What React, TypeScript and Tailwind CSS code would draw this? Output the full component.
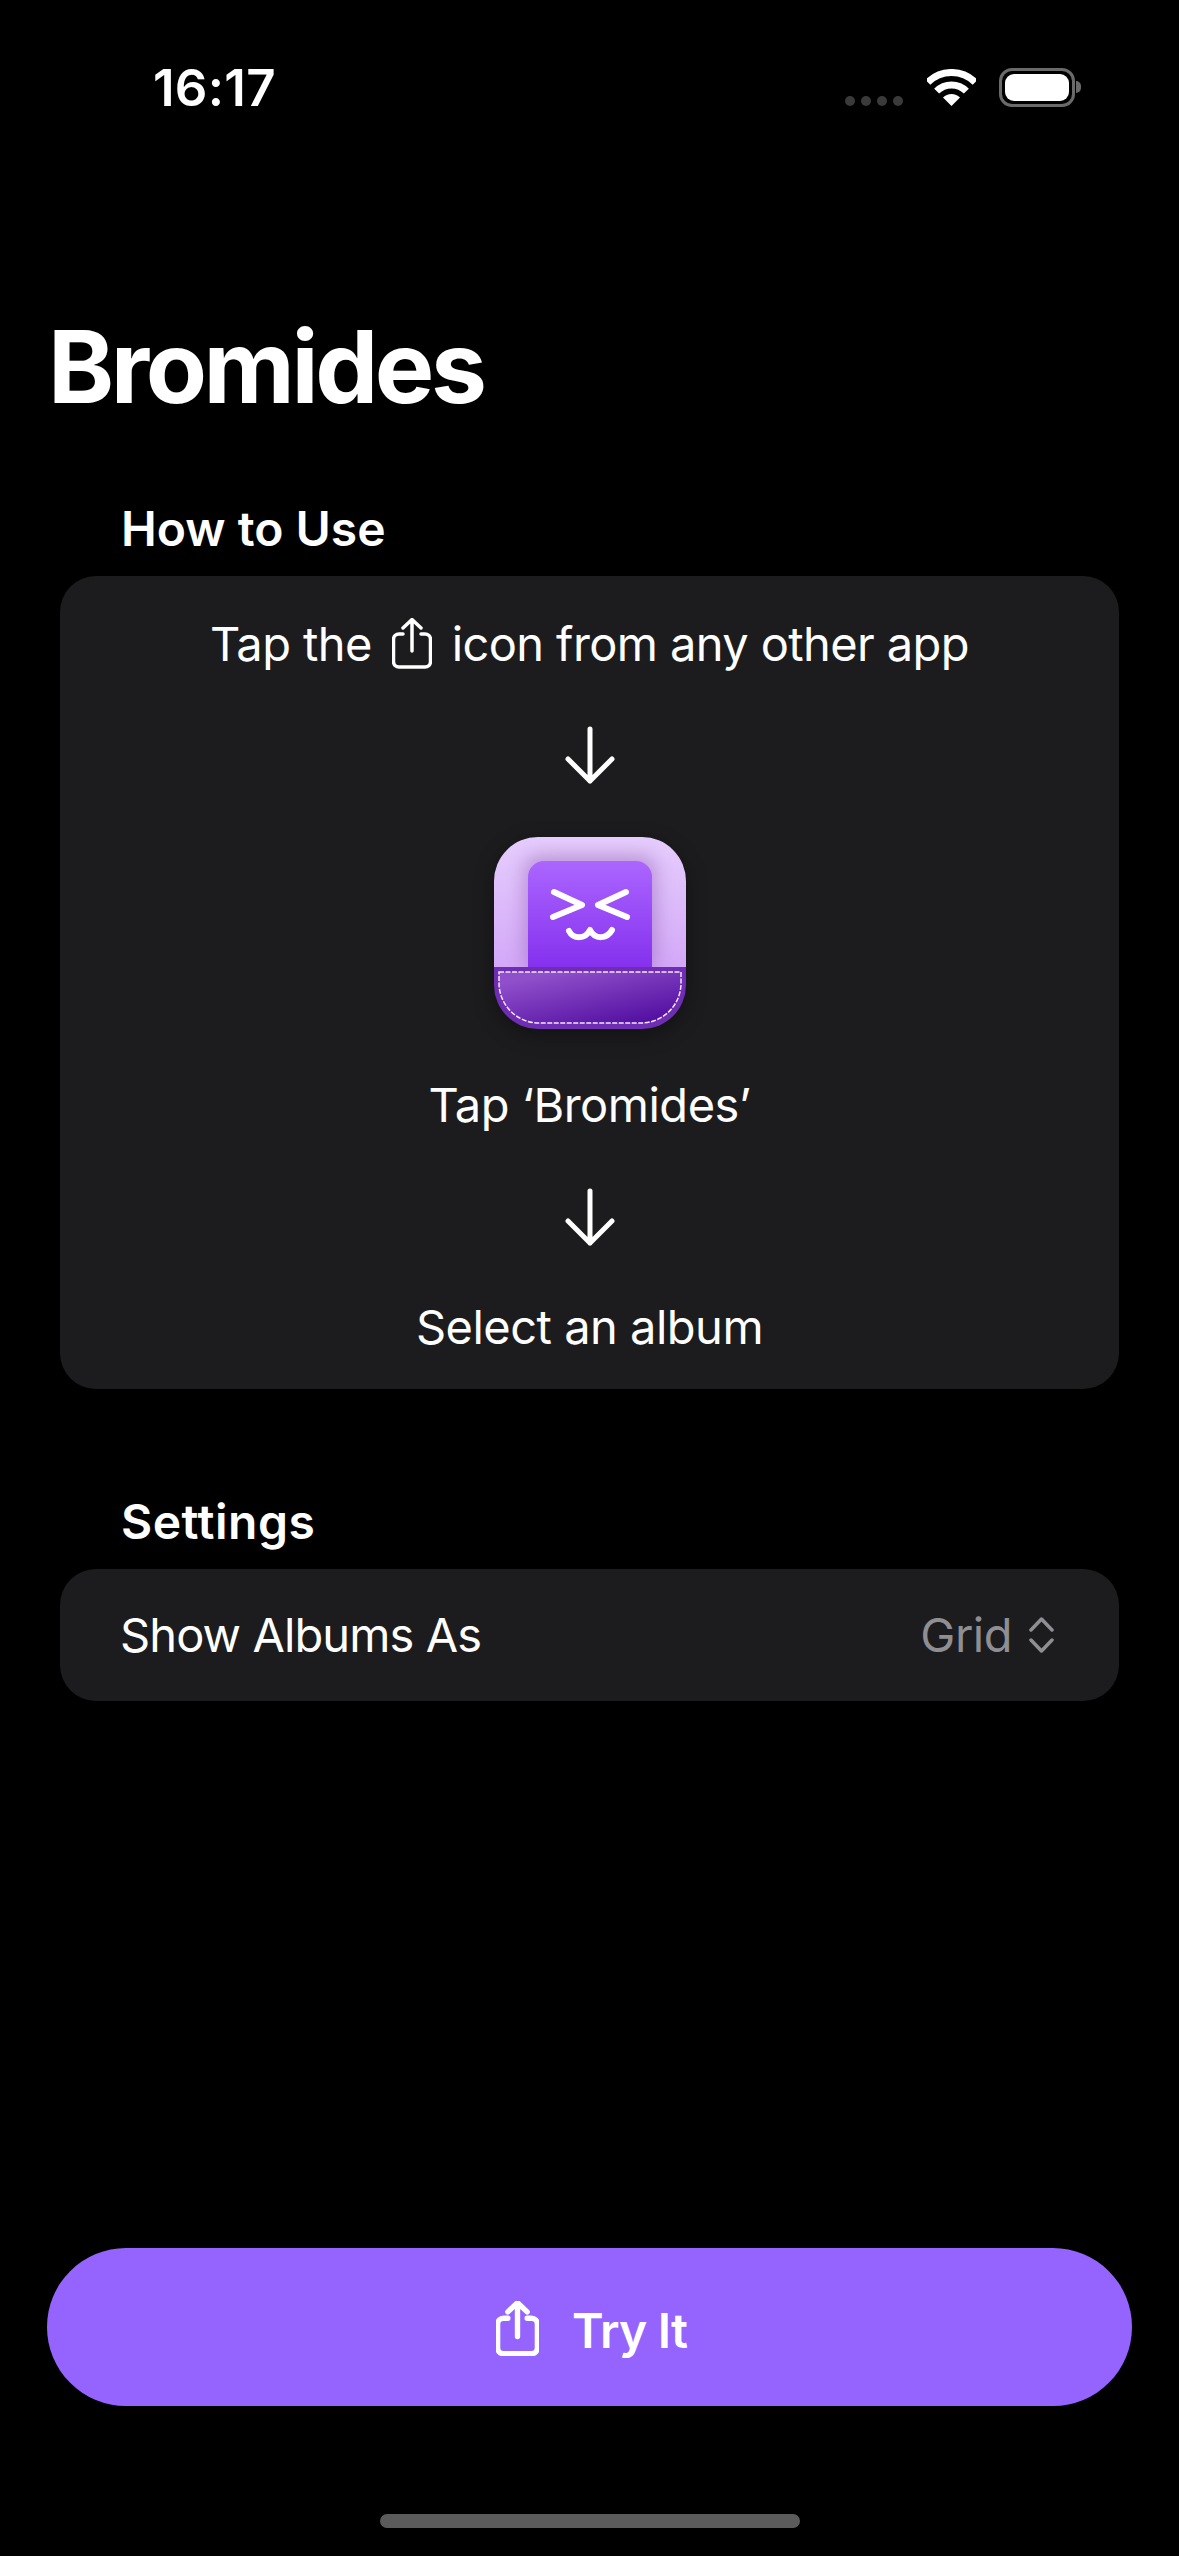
const ShareIcon = ({ className, stroke }: { className: string; stroke: number }) => (
  <svg viewBox="0 0 40 51" fill="none" stroke="white" strokeWidth={stroke} strokeLinecap="round" strokeLinejoin="round" className={className}>
    <path d="M11 16H7a5.5 5.5 0 0 0-5.5 5.5v22A5.5 5.5 0 0 0 7 49h26a5.5 5.5 0 0 0 5.5-5.5v-22A5.5 5.5 0 0 0 33 16h-4" />
    <path d="M20 33V2M11 10l9-8.500 9 8.500" />
  </svg>
);

const DownArrow = () => (
  <svg viewBox="0 0 50 58" fill="none" stroke="white" strokeWidth="5" strokeLinecap="round" strokeLinejoin="round" className="h-[58px] w-[50px]">
    <path d="M25 3v52M3 33l22 22 22-22" />
  </svg>
);

const AppIcon = () => (
  <svg viewBox="0 0 192 192" className="h-[192px] w-[192px] drop-shadow-[0_6px_10px_rgba(0,0,0,0.35)]">
    <defs>
      <linearGradient id="sleeve" x1="0" y1="0" x2="0" y2="1">
        <stop offset="0" stopColor="#e6cdfd" />
        <stop offset="1" stopColor="#d3a8f8" />
      </linearGradient>
      <linearGradient id="card" x1="0" y1="0" x2="0" y2="1">
        <stop offset="0" stopColor="#ab66ff" />
        <stop offset="1" stopColor="#8530ee" />
      </linearGradient>
      <linearGradient id="pocket" x1="0.15" y1="0.1" x2="0.85" y2="1">
        <stop offset="0" stopColor="#9150cb" />
        <stop offset="1" stopColor="#500da0" />
      </linearGradient>
      <clipPath id="tile">
        <rect width="192" height="192" rx="44" />
      </clipPath>
      <filter id="soft" x="-30%" y="-30%" width="160%" height="160%">
        <feGaussianBlur stdDeviation="9" />
      </filter>
    </defs>
    <g clipPath="url(#tile)">
      <rect width="192" height="131" fill="url(#sleeve)" />
      <rect x="30" y="18" width="132" height="118" rx="16" fill="#8a5aa8" opacity="0.45" filter="url(#soft)" />
      <path d="M34 131V40a16 16 0 0 1 16-16h92a16 16 0 0 1 16 16v91z" fill="url(#card)" />
      <rect y="130" width="192" height="62" fill="#6f2db4" />
      <path d="M5 135H187V146A40 40 0 0 1 147 186H45A40 40 0 0 1 5 146Z" fill="url(#pocket)" />
      <path d="M5 135H187V146A40 40 0 0 1 147 186H45A40 40 0 0 1 5 146Z" fill="none" stroke="#f6e6ff" strokeWidth="1.500" strokeDasharray="5 1.500" />
    </g>
    <g fill="none" stroke="white" strokeWidth="6" strokeLinecap="round" strokeLinejoin="round">
      <path d="M60 55l28 13-29 12M132 55l-28 13 29 12" />
      <path d="M75 94c4 8 16 9 21-1 5 10 17 9 22 0" />
    </g>
  </svg>
);

export default function App() {
  return (
    <div className="flex h-[2556px] w-[1179px] flex-col overflow-hidden bg-black text-white [font-family:Inter,sans-serif]">
      {/* status bar */}
      <div className="flex h-[174px] shrink-0 items-center justify-between pl-[153px] pr-[98px]">
        <span className="text-[51px] font-semibold leading-none tracking-[0.3px]">16:17</span>
        <div className="flex items-center">
          <div className="mr-[24px] mt-[28px] flex gap-[6px]">
            <span className="h-[10px] w-[10px] rounded-full bg-[#3a3a3a]" />
            <span className="h-[10px] w-[10px] rounded-full bg-[#3a3a3a]" />
            <span className="h-[10px] w-[10px] rounded-full bg-[#3a3a3a]" />
            <span className="h-[10px] w-[10px] rounded-full bg-[#3a3a3a]" />
          </div>
          <svg viewBox="0 0 49 37" className="mr-[23px] h-[37px] w-[49px]" fill="none" stroke="white" strokeWidth="7">
            <path d="M.8 13.300A33.500 33.500 0 0 1 48.200 13.300" />
            <path d="M9.650 22.150A21 21 0 0 1 39.350 22.150" />
            <path d="M24.500 37L16 28.500A12 12 0 0 1 33 28.500Z" fill="white" stroke="none" />
          </svg>
          <div className="flex items-center">
            <div className="flex h-[39px] w-[76px] items-center justify-center rounded-[13px] border-[3px] border-[#6a6a6a]">
              <div className="h-[27px] w-[64px] rounded-[9px] bg-white" />
            </div>
            <div className="ml-[1px] h-[12px] w-[5px] rounded-r-full bg-[#6a6a6a]" />
          </div>
        </div>
      </div>

      <h1 className="mt-[143px] h-[100px] pl-[48px] text-[100px] font-bold leading-[100px] tracking-[-3.4px]">Bromides</h1>

      <h2 className="mt-[82px] h-[60px] pl-[121px] text-[48px] font-semibold leading-[60px]">How to Use</h2>

      <div className="mx-[60px] mt-[17px] flex flex-col items-center rounded-[36px] bg-[#1c1c1e] pb-[32px] pt-[38px] text-[47px] leading-[60px] tracking-[-0.5px]">
        <div className="flex h-[60px] items-center tracking-[-0.6px]">
          <span>Tap the</span>
          <ShareIcon className="mx-[20px] mb-[2px] h-[51px] w-[40px]" stroke={3.5} />
          <span>icon from any other app</span>
        </div>
        <div className="mt-[52px]">
          <DownArrow />
        </div>
        <div className="mt-[53px]">
          <AppIcon />
        </div>
        <div className="mt-[46px] h-[60px]">Tap ‘Bromides’</div>
        <div className="mt-[53px]">
          <DownArrow />
        </div>
        <div className="mt-[51px] h-[60px]">Select an album</div>
      </div>

      <h2 className="mt-[103px] h-[60px] pl-[121px] text-[48px] font-semibold leading-[60px] tracking-[0.5px]">Settings</h2>

      <div className="mx-[60px] mt-[17px] flex h-[132px] items-center justify-between rounded-[36px] bg-[#1c1c1e] pl-[60px] pr-[65px] text-[47px] tracking-[-0.5px]">
        <span className="tracking-[-0.9px]">Show Albums As</span>
        <div className="flex items-center gap-[17px] text-[#8e8e93]">
          <span>Grid</span>
          <svg viewBox="0 0 25 36" className="h-[36px] w-[25px]" fill="none" stroke="#8e8e93" strokeWidth="3.500" strokeLinecap="round" strokeLinejoin="round">
            <path d="M2 13L12.500 2 23 13M2 23l10.500 11L23 23" />
          </svg>
        </div>
      </div>

      <div className="mx-[47px] mt-auto flex h-[158px] items-center justify-center gap-[33px] rounded-[79px] bg-[#9564ff] pl-[4px]">
        <ShareIcon className="mt-[2px] h-[55px] w-[43px]" stroke={5} />
        <span className="mt-[8px] text-[48px] font-semibold tracking-[-0.8px]">Try It</span>
      </div>

      <div className="mb-[28px] mt-[108px] h-[14px] w-[420px] self-center rounded-full bg-[#5b5b5b]" />
    </div>
  );
}
